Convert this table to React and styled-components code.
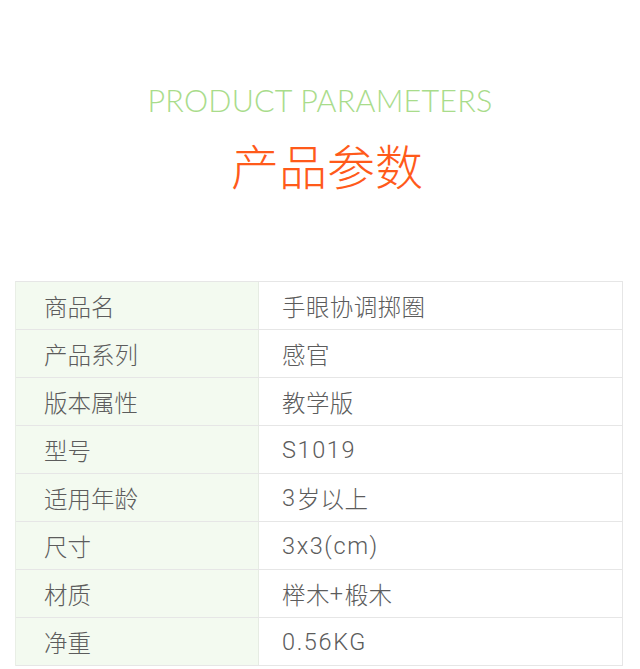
import React from 'react';
import styled, { createGlobalStyle } from 'styled-components';

const Global = createGlobalStyle`
	body {
		margin: 0;
		background: #fff;
		font-family: "Noto Sans CJK SC", "Noto Sans", sans-serif;
	}
`;

const Page = styled.div`
	width: 640px;
	padding-top: 84px;
`;

const Header = styled.header`
	display: flex;
	flex-direction: column;
	align-items: center;
`;

const EnTitle = styled.div`
	font-family: "Lato", "Noto Sans", sans-serif;
	font-weight: 300;
	font-size: 30.5px;
	line-height: 32px;
	color: #a9dc8b;
	letter-spacing: 0.2px;
`;

const CnTitle = styled.h1`
	margin: 18px 0 4px;
	padding-left: 14px;
	font-weight: 300;
	font-size: 48px;
	line-height: 60px;
	color: #ff5a1a;
`;

const Table = styled.div`
	margin: 83px 17px 0 15px;
	border-top: 1px solid #e6e6e6;
	border-left: 1px solid #e9eee6;
	border-right: 1px solid #e6e6e6;
`;

const Row = styled.div`
	display: grid;
	grid-template-columns: 243px 1fr;
	height: 48px;
	border-bottom: 1px solid #e6e6e6;
	box-sizing: border-box;
`;

const Cell = styled.div`
	display: flex;
	align-items: center;
	padding-left: ${p => (p.$label ? '28px' : '23px')};
	background: ${p => (p.$label ? '#f3faf0' : '#fff')};
	border-right: ${p => (p.$label ? '1px solid #e6ece3' : 'none')};
	font-size: 23.5px;
	font-weight: 300;
	color: #5c5c5c;
	white-space: pre;
	font-family: ${p => (p.$label ? '"Noto Sans CJK SC", sans-serif' : 'Roboto, "Noto Sans CJK SC", sans-serif')};
	letter-spacing: ${p => (p.$label ? '0' : '0.4px')};
`;

const Latin = styled.span`
	letter-spacing: 1.6px;
`;

const rows = [
	['商品名', '手眼协调掷圈'],
	['产品系列', '感官'],
	['版本属性', '教学版'],
	['型号', 'S1019'],
	['适用年龄', '3岁以上'],
	['尺寸', '3x3(cm)'],
	['材质', '榉木+椴木'],
	['净重', '0.56KG'],
];

// split a value into latin / cjk runs so latin can be spaced like the reference
const runs = text => text.match(/[\u4e00-\u9fff]+|[^\u4e00-\u9fff]+/g);

export default function App() {
	return (
		<Page>
			<Global />
			<Header>
				<EnTitle>PRODUCT PARAMETERS</EnTitle>
				<CnTitle>产品参数</CnTitle>
			</Header>
			<Table>
				{rows.map(([k, v]) => (
					<Row key={k}>
						<Cell $label>{k}</Cell>
						<Cell>
							{runs(v).map((r, i) =>
								/[\u4e00-\u9fff]/.test(r) ? r : <Latin key={i}>{r}</Latin>
							)}
						</Cell>
					</Row>
				))}
			</Table>
		</Page>
	);
}
